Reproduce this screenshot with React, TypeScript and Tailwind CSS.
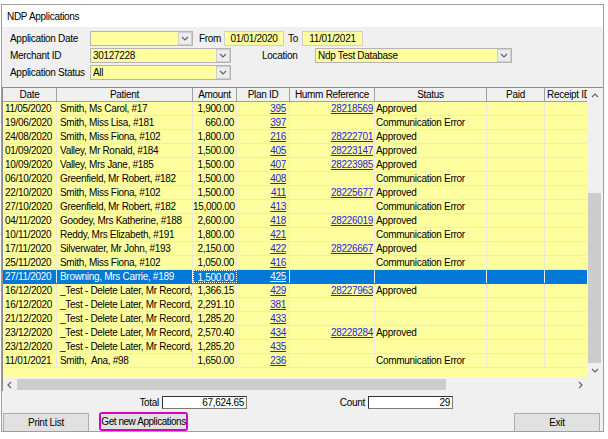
import React from "react";

type Row = {
  date: string;
  patient: string;
  amount: string;
  plan: string;
  humm: string;
  status: string;
  selected?: boolean;
};

const rows: Row[] = [
  { date: "11/05/2020", patient: "Smith, Ms Carol, #17", amount: "1,900.00", plan: "395", humm: "28218569", status: "Approved" },
  { date: "19/06/2020", patient: "Smith, Miss Lisa, #181", amount: "660.00", plan: "397", humm: "", status: "Communication Error" },
  { date: "24/08/2020", patient: "Smith, Miss Fiona, #102", amount: "1,800.00", plan: "216", humm: "28222701", status: "Approved" },
  { date: "01/09/2020", patient: "Valley, Mr Ronald, #184", amount: "1,500.00", plan: "405", humm: "28223147", status: "Approved" },
  { date: "10/09/2020", patient: "Valley, Mrs Jane, #185", amount: "1,500.00", plan: "407", humm: "28223985", status: "Approved" },
  { date: "06/10/2020", patient: "Greenfield, Mr Robert, #182", amount: "1,500.00", plan: "408", humm: "", status: "Communication Error" },
  { date: "22/10/2020", patient: "Smith, Miss Fiona, #102", amount: "1,500.00", plan: "411", humm: "28225677", status: "Approved" },
  { date: "27/10/2020", patient: "Greenfield, Mr Robert, #182", amount: "15,000.00", plan: "413", humm: "", status: "Communication Error" },
  { date: "04/11/2020", patient: "Goodey, Mrs Katherine, #188", amount: "2,600.00", plan: "418", humm: "28226019", status: "Approved" },
  { date: "10/11/2020", patient: "Reddy, Mrs Elizabeth, #191", amount: "1,800.00", plan: "421", humm: "", status: "Communication Error" },
  { date: "17/11/2020", patient: "Silverwater, Mr John, #193", amount: "2,150.00", plan: "422", humm: "28226667", status: "Approved" },
  { date: "25/11/2020", patient: "Smith, Miss Fiona, #102", amount: "1,050.00", plan: "416", humm: "", status: "Communication Error" },
  { date: "27/11/2020", patient: "Browning, Mrs Carrie, #189", amount: "1,500.00", plan: "425", humm: "", status: "", selected: true },
  { date: "16/12/2020", patient: "_Test - Delete Later, Mr Record,", amount: "1,366.15", plan: "429", humm: "28227963", status: "Approved" },
  { date: "16/12/2020", patient: "_Test - Delete Later, Mr Record,", amount: "2,291.10", plan: "381", humm: "", status: "" },
  { date: "21/12/2020", patient: "_Test - Delete Later, Mr Record,", amount: "1,285.20", plan: "433", humm: "", status: "" },
  { date: "23/12/2020", patient: "_Test - Delete Later, Mr Record,", amount: "2,570.40", plan: "434", humm: "28228284", status: "Approved" },
  { date: "23/12/2020", patient: "_Test - Delete Later, Mr Record,", amount: "1,285.20", plan: "435", humm: "", status: "" },
  { date: "11/01/2021", patient: "Smith,  Ana, #98", amount: "1,650.00", plan: "236", humm: "", status: "Communication Error" },
];

function Chevron({ dir = "down" }: { dir?: "down" | "up" | "left" | "right" }) {
  const pts = {
    down: "1,2 4,5 7,2",
    up: "1,5 4,2 7,5",
    left: "5,1 2,4 5,7",
    right: "3,1 6,4 3,7",
  }[dir];
  return (
    <svg width="8" height="8" viewBox="0 0 8 8">
      <polyline points={pts} fill="none" stroke="#606060" strokeWidth="1.1" />
    </svg>
  );
}

function Combo({ value, width }: { value: string; width: string }) {
  return (
    <div className={`${width} flex h-[15px] items-stretch border border-[#b4b4b4] bg-[#ffffa0]`}>
      <div className="flex-1 truncate pl-[2px] leading-[13px]">{value}</div>
      <div className="flex w-[14px] items-center justify-center border border-[#cfcfcf] bg-[#ececec]">
        <Chevron />
      </div>
    </div>
  );
}

function DateBox({ value, width }: { value: string; width: string }) {
  return (
    <div className={`${width} h-[15px] border border-[#cfcfcf] bg-[#ffffa0] text-center leading-[13px]`}>
      {value}
    </div>
  );
}

const headerCell = "flex items-center justify-center overflow-hidden whitespace-nowrap border-r border-[#a0a0a0]";
const cell = "overflow-hidden whitespace-nowrap border-r border-[#e8e8dc]";

export default function App() {
  return (
    <div className="h-[439px] w-[608px] bg-white pl-[1px] pt-[4px] font-['Liberation_Sans',Arial,sans-serif] text-[10px] tracking-[-0.3px] text-black">
      <div className="flex h-[428px] w-[603px] flex-col overflow-hidden border border-[#9e9e9e]">
        {/* title strip */}
        <div className="flex h-[22px] items-center bg-white pl-[5px]">NDP Applications</div>

        <div className="flex flex-1 flex-col bg-[#f0f0f0]">
          {/* filters */}
          <div className="flex flex-col gap-[2px] pt-[4px]">
            <div className="flex h-[15px] items-center">
              <div className="w-[88px] pl-[8px]">Application Date</div>
              <Combo value="" width="w-[103px]" />
              <div className="ml-[6px] w-[25px]">From</div>
              <DateBox value="01/01/2020" width="w-[60px]" />
              <div className="ml-[4px] w-[14px]">To</div>
              <DateBox value="11/01/2021" width="w-[61px]" />
            </div>
            <div className="flex h-[15px] items-center">
              <div className="w-[88px] pl-[8px]">Merchant ID</div>
              <Combo value="30127228" width="w-[141px]" />
              <div className="ml-[31px] w-[53px]">Location</div>
              <Combo value="Ndp Test Database" width="w-[197px]" />
            </div>
            <div className="flex h-[15px] items-center">
              <div className="w-[88px] whitespace-nowrap pl-[8px]">Application Status</div>
              <Combo value="All" width="w-[141px]" />
            </div>
          </div>

          {/* grid */}
          <div className="mt-[7px] flex h-[304px] flex-col border-l border-t border-[#8c8c8c]">
            <div className="flex h-[290px]">
              <div className="flex w-[584px] flex-col">
                <div className="flex h-[14px] border-b border-[#a0a0a0] bg-[#f0f0f0]">
                  <div className={`${headerCell} w-[54px]`}>Date</div>
                  <div className={`${headerCell} w-[136px]`}>Patient</div>
                  <div className={`${headerCell} w-[44px]`}>Amount</div>
                  <div className={`${headerCell} w-[53px]`}>Plan ID</div>
                  <div className={`${headerCell} w-[85px]`}>Humm Reference</div>
                  <div className={`${headerCell} w-[112px]`}>Status</div>
                  <div className={`${headerCell} w-[58px]`}>Paid</div>
                  <div className="flex w-[42px] items-center justify-start overflow-hidden whitespace-nowrap pl-[2px]">Receipt ID</div>
                </div>
                <div className="flex flex-1 flex-col bg-[#ffffa0]">
                  {rows.map((r, i) => (
                    <div
                      key={i}
                      className={`flex h-[14px] border-b leading-[13px] ${
                        r.selected ? "border-[#0078d7] bg-[#0078d7] text-white" : "border-[#e8e8dc]"
                      }`}
                    >
                      <div className={`${cell} w-[54px] pl-[2px]`}>{r.date}</div>
                      <div className={`${cell} w-[136px] whitespace-pre pl-[3px]`}>{r.patient}</div>
                      <div
                        className={`${cell} w-[44px] pr-[2px] text-right ${
                          r.selected ? "border border-dotted border-white" : ""
                        }`}
                      >
                        {r.amount}
                      </div>
                      <div className={`${cell} w-[53px] pr-[3px] text-right`}>
                        <span className={`underline ${r.selected ? "text-white" : "text-[#2424e0]"}`}>{r.plan}</span>
                      </div>
                      <div className={`${cell} w-[85px] pr-[1px] text-right`}>
                        <span className="text-[#2424e0] underline">{r.humm}</span>
                      </div>
                      <div className={`${cell} w-[112px] pl-[1px]`}>{r.status}</div>
                      <div className={`${cell} w-[58px]`} />
                      <div className="w-[42px]" />
                    </div>
                  ))}
                </div>
              </div>

              {/* vertical scrollbar */}
              <div className="flex w-[15px] flex-col bg-[#f0f0f0]">
                <div className="flex h-[15px] items-center justify-center">
                  <Chevron dir="up" />
                </div>
                <div className="h-[90px]" />
                <div className="mx-[1px] h-[170px] bg-[#cdcdcd]" />
                <div className="flex flex-1 items-center justify-center">
                  <Chevron dir="down" />
                </div>
              </div>
            </div>

            {/* horizontal scrollbar */}
            <div className="flex h-[13px]">
              <div className="flex w-[584px] items-center bg-[#f0f0f0]">
                <div className="flex w-[14px] justify-center">
                  <Chevron dir="left" />
                </div>
                <div className="my-[1px] h-[11px] w-[429px] bg-[#cdcdcd]" />
                <div className="ml-auto flex w-[14px] justify-center">
                  <Chevron dir="right" />
                </div>
              </div>
              <div className="w-[15px] bg-[#f0f0f0]" />
            </div>
          </div>

          {/* totals */}
          <div className="mt-[4px] flex h-[14px] items-center">
            <div className="w-[157px] text-right">Total</div>
            <div className="ml-[3px] h-[13px] w-[85px] border border-[#7a7a7a] border-l-[#333] border-t-[#333] bg-white pr-[2px] text-right leading-[11px]">
              67,624.65
            </div>
            <div className="w-[118px] text-right">Count</div>
            <div className="ml-[3px] h-[13px] w-[85px] border border-[#7a7a7a] border-l-[#333] border-t-[#333] bg-white pr-[2px] text-right leading-[11px]">
              29
            </div>
          </div>

          {/* buttons */}
          <div className="mt-[3px] flex h-[19px] items-start pl-[1px] pr-[3px]">
            <button className="mt-[1px] h-[19px] w-[86px] border border-[#adadad] bg-[#e1e1e1] text-[10px]">
              Print List
            </button>
            <div className="ml-[10px] h-[19px] w-[89px] rounded-[3px] border-2 border-[#d400c6]">
              <div className="flex h-full w-full items-center justify-center overflow-visible whitespace-nowrap bg-[#e1e1e1] text-[10px] tracking-[-0.45px]">
                Get new Applications
              </div>
            </div>
            <button className="ml-auto mt-[1px] h-[19px] w-[86px] border border-[#adadad] bg-[#e1e1e1] text-[10px]">
              Exit
            </button>
          </div>
        </div>
      </div>
    </div>
  );
}
